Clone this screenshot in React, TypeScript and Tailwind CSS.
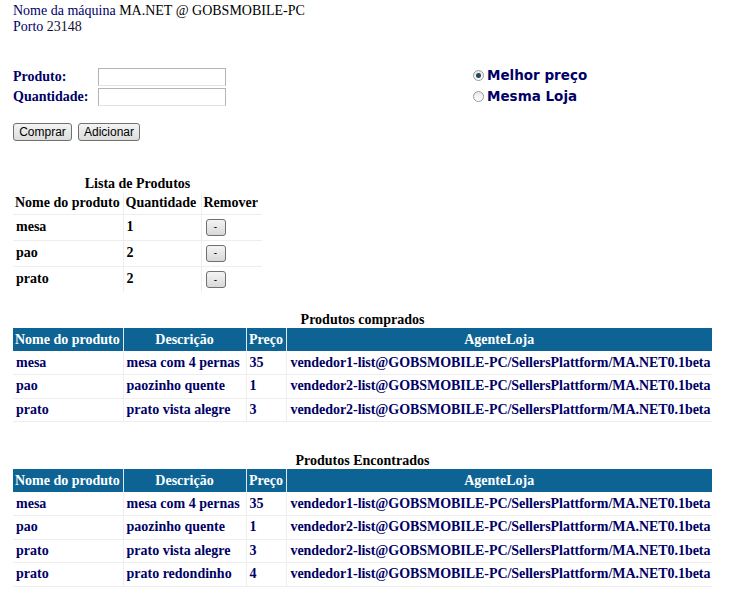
import React from "react";

const navy = "text-[#000066]";

type Row = { nome: string; desc: string; preco: string; agente: string };

const comprados: Row[] = [
  { nome: "mesa", desc: "mesa com 4 pernas", preco: "35", agente: "vendedor1-list@GOBSMOBILE-PC/SellersPlattform/MA.NET0.1beta" },
  { nome: "pao", desc: "paozinho quente", preco: "1", agente: "vendedor2-list@GOBSMOBILE-PC/SellersPlattform/MA.NET0.1beta" },
  { nome: "prato", desc: "prato vista alegre", preco: "3", agente: "vendedor2-list@GOBSMOBILE-PC/SellersPlattform/MA.NET0.1beta" },
];

const encontrados: Row[] = [
  ...comprados,
  { nome: "prato", desc: "prato redondinho", preco: "4", agente: "vendedor1-list@GOBSMOBILE-PC/SellersPlattform/MA.NET0.1beta" },
];

const lista = [
  { nome: "mesa", qtd: "1" },
  { nome: "pao", qtd: "2" },
  { nome: "prato", qtd: "2" },
];

function Radio({ checked }: { checked?: boolean }) {
  return (
    <span className="inline-flex items-center justify-center w-[11px] h-[11px] rounded-full border border-[#9a9a9a] bg-gradient-to-b from-[#e8e8e8] to-white mr-[3px]">
      {checked && <span className="w-[5px] h-[5px] rounded-full bg-[#1f4a5a]" />}
    </span>
  );
}

function ResultTable({ title, rows }: { title: string; rows: Row[] }) {
  return (
    <table className="border-collapse table-fixed w-[699px] text-[14px] font-bold leading-[16px]">
      <caption className="h-[17px] leading-[17px] text-black">{title}</caption>
      <colgroup>
        <col className="w-[110px]" />
        <col className="w-[123px]" />
        <col className="w-[40px]" />
        <col />
      </colgroup>
      <thead>
        <tr className="bg-[#0d6494] text-white h-[23px]">
          <th className="px-[2px] text-left border-r border-[#dfe8ee] whitespace-nowrap">Nome do produto</th>
          <th className="px-[2px] text-center border-r border-[#dfe8ee]">Descrição</th>
          <th className="px-0 text-center border-r border-[#dfe8ee]">Preço</th>
          <th className="px-[2px] text-center">AgenteLoja</th>
        </tr>
      </thead>
      <tbody className={navy}>
        {rows.map((r, i) => (
          <tr key={i} className="h-[23.5px] border-b border-[#eeeeee]">
            <td className="px-[3px] border-r border-[#eeeeee]">{r.nome}</td>
            <td className="px-[3px] border-r border-[#eeeeee] whitespace-nowrap">{r.desc}</td>
            <td className="px-[3px] border-r border-[#eeeeee]">{r.preco}</td>
            <td className="pl-[4px] pr-0 whitespace-nowrap tracking-[-0.05px]">{r.agente}</td>
          </tr>
        ))}
      </tbody>
    </table>
  );
}

export default function App() {
  return (
    <div className="w-[731px] h-[597px] bg-white pl-[13px] pt-[3px] font-['Liberation_Serif',serif] text-[14px] leading-[16px] overflow-hidden">
      <div>
        <span className={navy}>Nome da máquina</span> <span className="text-black">MA.NET @ GOBSMOBILE-PC</span>
      </div>
      <div>
        <span className={navy}>Porto</span> <span className="text-[#111133]">23148</span>
      </div>

      <div className="flex mt-[33px]">
        <div className="w-[460px]">
          <div className="flex items-center h-[18px]">
            <label className={`w-[85px] font-bold ${navy}`}>Produto:</label>
            <input className="w-[128px] h-[18px] border border-[#b4b4b4] border-b-[#e3e3e3] bg-white" />
          </div>
          <div className="flex items-center h-[18px] mt-[2px]">
            <label className={`w-[85px] font-bold ${navy}`}>Quantidade:</label>
            <input className="w-[128px] h-[18px] border border-[#b4b4b4] border-b-[#e3e3e3] bg-white" />
          </div>
        </div>
        <div className={`font-['DejaVu_Sans',sans-serif] font-bold text-[13.5px] leading-[21px] -mt-[3px] ${navy}`}>
          <div className="flex items-center"><Radio checked />Melhor preço</div>
          <div className="flex items-center"><Radio />Mesma Loja</div>
        </div>
      </div>

      <div className="flex gap-[6px] mt-[16px] font-['Liberation_Sans',sans-serif] text-[12px]">
        <button className="h-[18px] w-[59px] border border-[#707070] rounded-[3px] bg-gradient-to-b from-[#f4f4f4] to-[#dcdcdc] leading-[14px] text-black">Comprar</button>
        <button className="h-[18px] w-[62px] border border-[#707070] rounded-[3px] bg-gradient-to-b from-[#f4f4f4] to-[#dcdcdc] leading-[14px] text-black">Adicionar</button>
      </div>

      <table className="border-collapse mt-[34px] text-[14px] font-bold leading-[16px] text-black">
        <caption className="h-[18px] leading-[18px]">Lista de Produtos</caption>
        <thead>
          <tr className="h-[21px] border-b border-[#eeeeee]">
            <th className="w-[110px] px-[2px] text-left border-r border-[#eeeeee] whitespace-nowrap">Nome do produto</th>
            <th className="w-[78px] px-[2px] text-left border-r border-[#eeeeee]">Quantidade</th>
            <th className="w-[61px] px-[2px] text-left">Remover</th>
          </tr>
        </thead>
        <tbody>
          {lista.map((l) => (
            <tr key={l.nome} className="h-[26px] border-b border-[#eeeeee] last:border-b-0">
              <td className="px-[3px] border-r border-[#eeeeee]">{l.nome}</td>
              <td className="px-[3px] border-r border-[#eeeeee]">{l.qtd}</td>
              <td className="px-[3px]">
                <button className="w-[20px] h-[17px] ml-[1px] border border-[#707070] rounded-[3px] bg-gradient-to-b from-[#f4f4f4] to-[#d8d8d8] text-[10px] leading-[12px] font-normal font-['Liberation_Sans',sans-serif]">-</button>
              </td>
            </tr>
          ))}
        </tbody>
      </table>

      <div className="mt-[19px]">
        <ResultTable title="Produtos comprados" rows={comprados} />
      </div>
      <div className="mt-[30px]">
        <ResultTable title="Produtos Encontrados" rows={encontrados} />
      </div>
    </div>
  );
}
